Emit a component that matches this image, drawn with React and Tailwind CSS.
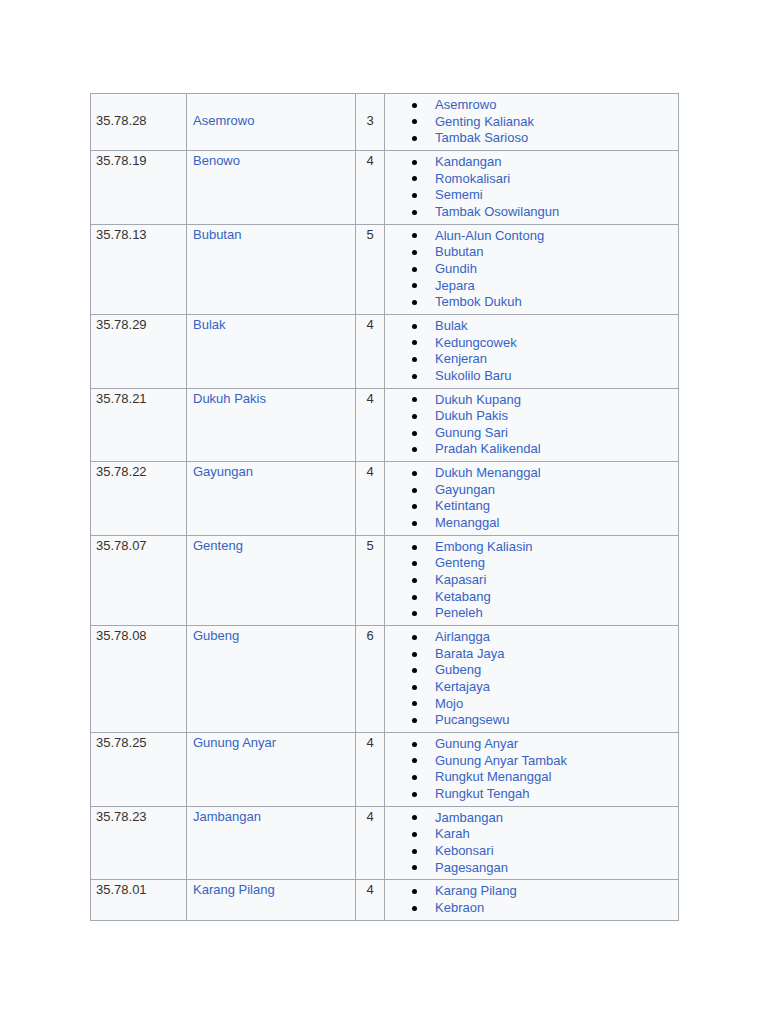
import React from 'react'

const rows = [
  { code: '35.78.28', name: 'Asemrowo', n: 3, items: ['Asemrowo', 'Genting Kalianak', 'Tambak Sarioso'], middle: true },
  { code: '35.78.19', name: 'Benowo', n: 4, items: ['Kandangan', 'Romokalisari', 'Sememi', 'Tambak Osowilangun'] },
  { code: '35.78.13', name: 'Bubutan', n: 5, items: ['Alun-Alun Contong', 'Bubutan', 'Gundih', 'Jepara', 'Tembok Dukuh'] },
  { code: '35.78.29', name: 'Bulak', n: 4, items: ['Bulak', 'Kedungcowek', 'Kenjeran', 'Sukolilo Baru'] },
  { code: '35.78.21', name: 'Dukuh Pakis', n: 4, items: ['Dukuh Kupang', 'Dukuh Pakis', 'Gunung Sari', 'Pradah Kalikendal'] },
  { code: '35.78.22', name: 'Gayungan', n: 4, items: ['Dukuh Menanggal', 'Gayungan', 'Ketintang', 'Menanggal'] },
  { code: '35.78.07', name: 'Genteng', n: 5, items: ['Embong Kaliasin', 'Genteng', 'Kapasari', 'Ketabang', 'Peneleh'] },
  { code: '35.78.08', name: 'Gubeng', n: 6, items: ['Airlangga', 'Barata Jaya', 'Gubeng', 'Kertajaya', 'Mojo', 'Pucangsewu'] },
  { code: '35.78.25', name: 'Gunung Anyar', n: 4, items: ['Gunung Anyar', 'Gunung Anyar Tambak', 'Rungkut Menanggal', 'Rungkut Tengah'] },
  { code: '35.78.23', name: 'Jambangan', n: 4, items: ['Jambangan', 'Karah', 'Kebonsari', 'Pagesangan'] },
  { code: '35.78.01', name: 'Karang Pilang', n: 4, items: ['Karang Pilang', 'Kebraon'] },
]

export default function App() {
  return (
    <div className="w-[768px] h-[1024px] bg-white pt-[93px] pl-[90px]" style={{ fontFamily: '"Liberation Sans", Arial, sans-serif' }}>
      {/* District table */}
      <table className="w-[588px] table-fixed border-collapse bg-[#f8f9fa] text-[13px] leading-[16.65px] text-[#333]">
        <colgroup>
          <col className="w-[96px]" />
          <col className="w-[169px]" />
          <col className="w-[29px]" />
          <col className="w-[294px]" />
        </colgroup>
        <tbody>
          {rows.map(r => {
            const va = r.middle ? 'align-middle' : 'align-top'
            return (
              <tr key={r.code}>
                <td className={`border border-[#a2a9b1] pl-[5px] pt-[2px] pb-[4px] ${va}`}>{r.code}</td>
                <td className={`border border-[#a2a9b1] pl-[6px] pt-[2px] pb-[4px] text-[#3563c4] ${va}`}>{r.name}</td>
                <td className={`border border-[#a2a9b1] pt-[2px] pb-[4px] text-center ${va}`}>{r.n}</td>
                <td className="border border-[#a2a9b1] pt-[3px] pb-[3px] align-top">
                  <ul className="pl-[27px]">
                    {r.items.map(it => (
                      <li key={it} className="flex items-center">
                        <span className="w-[5px] h-[5px] rounded-full bg-black mr-[18px] shrink-0" />
                        <span className="text-[#3563c4]">{it}</span>
                      </li>
                    ))}
                  </ul>
                </td>
              </tr>
            )
          })}
        </tbody>
      </table>
    </div>
  )
}
